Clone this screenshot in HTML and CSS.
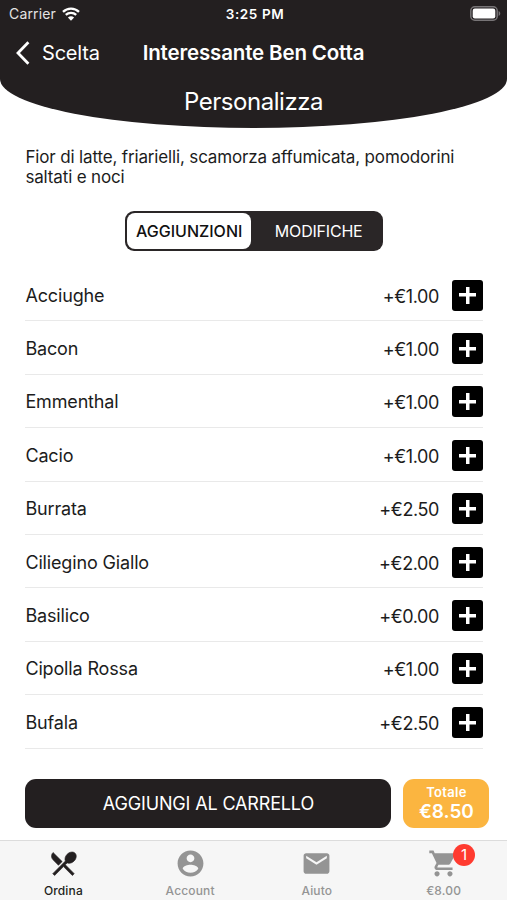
FILE: index.html
```html
<!DOCTYPE html>
<html lang="it">
<head>
  <meta charset="UTF-8" />
  <meta name="viewport" content="width=device-width, initial-scale=1.0"/>
  <title>Personalizza</title>
  <link rel="stylesheet" href="styles.css">
</head>
<body>
  <header class="header">
    <div class="status-bar">
      <div class="carrier">
        <span>Carrier</span>
        <svg class="wifi" viewBox="0 0 18 14"><path d="M1 4.9a11.5 11.5 0 0 1 16 0M3.8 7.9a7.5 7.5 0 0 1 10.4 0" fill="none" stroke="#fff" stroke-width="2.3"/><path d="M5.9 10.6a4.5 4.5 0 0 1 6.2 0L9 13.7z" fill="#fff"/></svg>
      </div>
      <span class="time">3:25 PM</span>
      <svg class="battery" viewBox="0 0 31 15"><rect x=".8" y=".8" width="26.4" height="13.4" rx="4" fill="#231f20" stroke="#777476" stroke-width="1.5"/><rect x="2.7" y="2.6" width="22.6" height="9.8" rx="2.2" fill="#fff"/><path d="M28.6 5v5c2.2-.8 2.2-4.2 0-5z" fill="#777476"/></svg>
    </div>
    <nav class="nav-bar">
      <a class="back">
        <svg class="chevron" viewBox="0 0 14 24"><path d="M12.4 1.3L2 12l10.4 10.7" fill="none" stroke="#fff" stroke-width="2.8"/></svg>
        <span>Scelta</span>
      </a>
      <strong class="nav-title">Interessante Ben Cotta</strong>
    </nav>
    <h1 class="title">Personalizza</h1>
  </header>

  <main class="content">
    <p class="description">Fior di latte, friarielli, scamorza affumicata, pomodorini<br>saltati e noci</p>

    <div class="tabs">
      <button class="tab active">AGGIUNZIONI</button>
      <button class="tab">MODIFICHE</button>
    </div>

    <ul class="list">
      <li class="item"><span class="name">Acciughe</span><span class="price">+€1.00</span><button class="add"></button></li>
      <li class="item"><span class="name">Bacon</span><span class="price">+€1.00</span><button class="add"></button></li>
      <li class="item"><span class="name">Emmenthal</span><span class="price">+€1.00</span><button class="add"></button></li>
      <li class="item"><span class="name">Cacio</span><span class="price">+€1.00</span><button class="add"></button></li>
      <li class="item"><span class="name">Burrata</span><span class="price">+€2.50</span><button class="add"></button></li>
      <li class="item"><span class="name">Ciliegino Giallo</span><span class="price">+€2.00</span><button class="add"></button></li>
      <li class="item"><span class="name">Basilico</span><span class="price">+€0.00</span><button class="add"></button></li>
      <li class="item"><span class="name">Cipolla Rossa</span><span class="price">+€1.00</span><button class="add"></button></li>
      <li class="item"><span class="name">Bufala</span><span class="price">+€2.50</span><button class="add"></button></li>
    </ul>

    <div class="actions">
      <button class="add-cart">AGGIUNGI AL CARRELLO</button>
      <div class="total">
        <span class="total-label">Totale</span>
        <span class="total-value">€8.50</span>
      </div>
    </div>
  </main>

  <footer class="tab-bar">
    <a class="tab-item selected">
      <svg class="icon" viewBox="0 0 24 24"><path stroke="currentColor" stroke-width=".5" d="M8.1 13.34l2.83-2.83L3.91 3.5c-1.56 1.56-1.56 4.09 0 5.66l4.19 4.18zm6.78-1.81c1.53.71 3.68.21 5.27-1.38 1.91-1.91 2.28-4.65.81-6.12-1.46-1.46-4.2-1.1-6.12.81-1.59 1.59-2.09 3.74-1.38 5.27L3.7 19.87l1.41 1.41L12 14.41l6.88 6.88 1.41-1.41L13.41 13l1.47-1.47z"/></svg>
      <span>Ordina</span>
    </a>
    <a class="tab-item">
      <svg class="icon" viewBox="0 0 24 24"><path d="M12 2C6.48 2 2 6.48 2 12s4.48 10 10 10 10-4.48 10-10S17.52 2 12 2zm0 3c1.66 0 3 1.34 3 3s-1.34 3-3 3-3-1.34-3-3 1.34-3 3-3zm0 14.2c-2.5 0-4.71-1.28-6-3.22.03-1.99 4-3.08 6-3.08 1.99 0 5.97 1.09 6 3.08-1.29 1.94-3.5 3.22-6 3.22z"/></svg>
      <span>Account</span>
    </a>
    <a class="tab-item">
      <svg class="icon" viewBox="0 0 24 24"><path d="M20 4H4c-1.1 0-1.99.9-1.99 2L2 18c0 1.1.9 2 2 2h16c1.1 0 2-.9 2-2V6c0-1.1-.9-2-2-2zm0 4l-8 5-8-5V6l8 5 8-5v2z"/></svg>
      <span>Aiuto</span>
    </a>
    <a class="tab-item">
      <svg class="icon" viewBox="0 0 24 24"><path d="M7 18c-1.1 0-1.99.9-1.99 2S5.9 22 7 22s2-.9 2-2-.9-2-2-2zM1 2v2h2l3.6 7.59-1.35 2.45c-.16.28-.25.61-.25.96 0 1.1.9 2 2 2h12v-2H7.42c-.14 0-.25-.11-.25-.25l.03-.12.9-1.63h7.45c.75 0 1.41-.41 1.75-1.03l3.58-6.49c.08-.14.12-.31.12-.48 0-.55-.45-1-1-1H5.21l-.94-2H1zm16 16c-1.1 0-1.99.9-1.99 2s.89 2 1.99 2 2-.9 2-2-.9-2-2-2z"/></svg>
      <span>€8.00</span>
      <b class="badge">1</b>
    </a>
  </footer>
</body>
</html>
```
FILE: styles.css
```css
* {
  box-sizing: border-box;
}

body {
  margin: 0;
  height: 900px;
  display: flex;
  flex-direction: column;
  overflow: hidden;
  font-family: Inter, 'Liberation Sans', sans-serif;
  background-color: #fff;
  color: #1c1c1c;
}

button {
  font-family: inherit;
  border: none;
  padding: 0;
}

.header {
  height: 128px;
  background-color: #231f20;
  color: #fff;
  border-radius: 0 0 50% 50% / 0 0 49px 49px;
}

.status-bar {
  height: 27px;
  padding: 0 6px 0 9px;
  display: grid;
  grid-template-columns: 1fr auto 1fr;
  align-items: center;
  font-size: 14px;
}

.carrier {
  display: flex;
  align-items: center;
  gap: 6px;
  color: #e4e3e3;
  letter-spacing: 0.15px;
}

.wifi {
  width: 18px;
  height: 14px;
}

.time {
  font-weight: 600;
  font-size: 13.5px;
  letter-spacing: 0.6px;
}

.battery {
  width: 31px;
  height: 15px;
  justify-self: end;
}

.nav-bar {
  height: 51px;
  padding: 0 16px;
  display: grid;
  grid-template-columns: 1fr auto 1fr;
  align-items: center;
}

.back {
  display: flex;
  align-items: center;
  gap: 12px;
  font-size: 20px;
  letter-spacing: -0.2px;
}

.chevron {
  width: 14px;
  height: 24px;
}

.nav-title {
  font-size: 20.5px;
  font-weight: 600;
  letter-spacing: -0.15px;
}

.title {
  margin: 1px 0 0;
  text-align: center;
  font-size: 24px;
  font-weight: 400;
  line-height: 46px;
  letter-spacing: -0.45px;
}

.content {
  flex: 1;
  padding: 0 24px 0 25.4px;
}

.description {
  margin: 19px 0 0;
  font-size: 17px;
  line-height: 20px;
  letter-spacing: -0.15px;
}

.tabs {
  width: 258px;
  height: 40px;
  margin: 24px auto 0;
  padding: 2px;
  display: flex;
  border-radius: 9px;
  background-color: #2a2627;
}

.tab {
  flex: 1;
  padding-left: 5px;
  border-radius: 8px;
  background: none;
  color: #fff;
  font-size: 16px;
  letter-spacing: -0.2px;
}

.tab.active {
  flex: 0 0 124px;
  padding-left: 0;
  background-color: #fff;
  color: #111;
  font-weight: 500;
  letter-spacing: 0;
}

.list {
  margin: 17px 0 0;
  padding: 0;
  list-style: none;
}

.item {
  height: 53.4px;
  padding-top: 2px;
  display: flex;
  align-items: center;
  border-bottom: 1px solid #e9e9e9;
  font-size: 18px;
}

.name {
  flex: 1;
  letter-spacing: -0.15px;
}

.price {
  margin: 2px 13px 0 0;
  letter-spacing: -0.4px;
}

.add {
  width: 31px;
  height: 31px;
  border-radius: 3px;
  background: linear-gradient(#fff, #fff) center / 17px 3.5px no-repeat,
    linear-gradient(#fff, #fff) center / 3.5px 17px no-repeat,
    #000;
}

.actions {
  margin: 30px -7px 0 0;
  display: flex;
  gap: 12px;
}

.add-cart {
  width: 366px;
  height: 49px;
  border-radius: 11px;
  background-color: #231f20;
  color: #fff;
  font-size: 18px;
  letter-spacing: -0.15px;
}

.total {
  width: 86px;
  height: 49px;
  display: flex;
  flex-direction: column;
  align-items: center;
  justify-content: center;
  border-radius: 11px;
  background-color: #fbb540;
  color: #fff;
  font-weight: 600;
}

.total-label {
  font-size: 13px;
  line-height: 18px;
  letter-spacing: 0.3px;
}

.total-value {
  font-size: 19px;
  line-height: 22px;
}

.tab-bar {
  height: 60px;
  display: grid;
  grid-template-columns: repeat(4, 1fr);
  border-top: 1px solid #dcdcdc;
  background-color: #f6f6f6;
}

.tab-item {
  position: relative;
  padding-top: 7px;
  display: flex;
  flex-direction: column;
  align-items: center;
  gap: 5px;
  color: #949494;
  font-size: 12px;
  font-weight: 500;
  line-height: 14px;
  letter-spacing: 0.15px;
}

.tab-item.selected {
  color: #231f20;
}

.icon {
  width: 31px;
  height: 31px;
  fill: currentColor;
}

.badge {
  position: absolute;
  top: 3px;
  left: 73px;
  width: 22px;
  height: 22px;
  border-radius: 50%;
  background-color: #ff3b30;
  color: #fff;
  font-size: 15px;
  font-weight: 400;
  line-height: 22px;
  text-align: center;
}
```
